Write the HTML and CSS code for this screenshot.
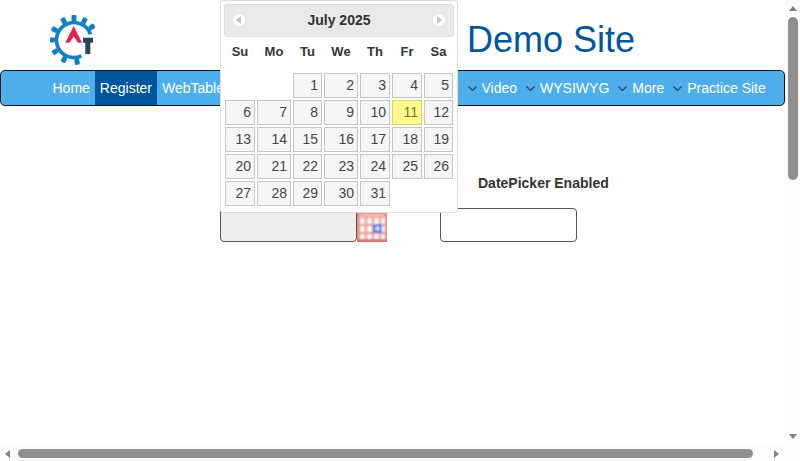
FILE: index.html
```html
<!DOCTYPE html>
<html lang="en">
<head>
<meta charset="UTF-8">
<meta name="viewport" content="width=device-width, initial-scale=1.0">
<title>Datepicker</title>
<link rel="stylesheet" href="styles.css">
</head>
<body>
<div class="window">
    <div class="page">
        <header class="site-header">
            <svg class="logo" width="50" height="54" viewBox="0 0 50 54">
                <path d="M40.5 21.3A17.5 17.5 0 1 0 31.4 42.9" fill="none" stroke="#1480c4" stroke-width="3.6"/>
                <g fill="#1480c4">
                    <rect x="21.5" y="2" width="5" height="6" rx="1"/>
                    <rect x="21.5" y="2" width="5" height="6" rx="1" transform="rotate(28 24 27)"/>
                    <rect x="21.5" y="2" width="5" height="6" rx="1" transform="rotate(54 24 27)"/>
                    <rect x="21.5" y="2" width="5" height="6" rx="1" transform="rotate(-28 24 27)"/>
                    <rect x="21.5" y="2" width="5" height="6" rx="1" transform="rotate(-62 24 27)"/>
                    <rect x="21.5" y="2" width="5" height="6" rx="1" transform="rotate(-90 24 27)"/>
                    <rect x="21.5" y="2" width="5" height="6" rx="1" transform="rotate(-122 24 27)"/>
                    <rect x="21.5" y="2" width="5" height="6" rx="1" transform="rotate(-153 24 27)"/>
                    <rect x="21.5" y="2" width="5" height="6" rx="1" transform="rotate(172 24 27)"/>
                </g>
                <path d="M23.7 13L32 29.7H28L23.7 23.5 19.4 29.7H15.3Z" fill="#e0244f"/>
                <path d="M33 24.7H43V29.7H40.3V41H35.3V29.7H33Z" fill="#24435e"/>
            </svg>
            <h1 class="site-title">Demo Site</h1>
        </header>

        <nav class="navbar">
            <a href="#">Home</a>
            <a href="#" class="active">Register</a>
            <a href="#">WebTable</a>
            <a href="#" class="has-menu">SwitchTo</a>
            <a href="#" class="has-menu"><svg class="chevron" width="9" height="5" viewBox="0 0 9 5"><path d="M.5.5l4 4 4-4" fill="none" stroke="#2f4a60" stroke-width="1.3"/></svg>Widgets</a>
            <a href="#" class="has-menu"><svg class="chevron" width="9" height="5" viewBox="0 0 9 5"><path d="M.5.5l4 4 4-4" fill="none" stroke="#2f4a60" stroke-width="1.3"/></svg>Interactions</a>
            <a href="#" class="has-menu"><svg class="chevron" width="9" height="5" viewBox="0 0 9 5"><path d="M.5.5l4 4 4-4" fill="none" stroke="#2f4a60" stroke-width="1.3"/></svg>Video</a>
            <a href="#" class="has-menu"><svg class="chevron" width="9" height="5" viewBox="0 0 9 5"><path d="M.5.5l4 4 4-4" fill="none" stroke="#2f4a60" stroke-width="1.3"/></svg>WYSIWYG</a>
            <a href="#" class="has-menu"><svg class="chevron" width="9" height="5" viewBox="0 0 9 5"><path d="M.5.5l4 4 4-4" fill="none" stroke="#2f4a60" stroke-width="1.3"/></svg>More</a>
            <a href="#" class="has-menu"><svg class="chevron" width="9" height="5" viewBox="0 0 9 5"><path d="M.5.5l4 4 4-4" fill="none" stroke="#2f4a60" stroke-width="1.3"/></svg>Practice Site</a>
        </nav>

        <main class="picker-row">
            <div class="picker-field">
                <label>DatePicker Disabled</label>
                <div class="picker-input-wrap">
                    <input type="text" class="date-input" disabled>
                    <svg class="cal-icon" width="30" height="29" viewBox="0 0 30 29">
                        <defs>
                            <filter id="soft" x="-10%" y="-10%" width="120%" height="120%"><feGaussianBlur stdDeviation="0.8"/></filter>
                        </defs>
                        <rect width="30" height="29" fill="#ee8d88"/>
                        <rect y="26" width="30" height="3" fill="#dc7470"/>
                        <g filter="url(#soft)">
                            <rect x="3" y="1" width="24" height="3" fill="#f7c0bb"/>
                            <g fill="#fff">
                                <rect x="3" y="5" width="5" height="6"/><rect x="10" y="5" width="5" height="6"/><rect x="17" y="5" width="5" height="6"/><rect x="24" y="5" width="4" height="6"/>
                                <rect x="3" y="13" width="5" height="6"/><rect x="10" y="13" width="5" height="6"/><rect x="24" y="13" width="4" height="6"/>
                                <rect x="3" y="21" width="5" height="5"/><rect x="10" y="21" width="5" height="5"/><rect x="17" y="21" width="5" height="5"/><rect x="24" y="21" width="4" height="5"/>
                            </g>
                            <rect x="16" y="11" width="9" height="9" fill="#3f72e8"/>
                            <rect x="18.5" y="13.5" width="4" height="4" fill="#f0f4fd"/>
                        </g>
                    </svg>
                </div>
            </div>
            <div class="picker-field">
                <label>DatePicker Enabled</label>
                <input type="text" class="date-input">
            </div>
        </main>

        <div class="calendar">
            <div class="cal-header">
                <span class="cal-btn"><svg width="6" height="8" viewBox="0 0 6 8"><path d="M5 0v8L0 4z" fill="#c4c4c4"/></svg></span>
                <span class="cal-month">July 2025</span>
                <span class="cal-btn"><svg width="6" height="8" viewBox="0 0 6 8"><path d="M1 0v8l5-4z" fill="#c4c4c4"/></svg></span>
            </div>
            <div class="cal-grid">
                <b>Su</b><b>Mo</b><b>Tu</b><b>We</b><b>Th</b><b>Fr</b><b>Sa</b>
                <i></i><i></i>
                <a>1</a><a>2</a><a>3</a><a>4</a><a>5</a>
                <a>6</a><a>7</a><a>8</a><a>9</a><a>10</a><a class="today">11</a><a>12</a>
                <a>13</a><a>14</a><a>15</a><a>16</a><a>17</a><a>18</a><a>19</a>
                <a>20</a><a>21</a><a>22</a><a>23</a><a>24</a><a>25</a><a>26</a>
                <a>27</a><a>28</a><a>29</a><a>30</a><a>31</a>
            </div>
        </div>
    </div>

    <div class="scrollbar-v">
        <span class="arrow-up"></span>
        <span class="thumb-v"></span>
        <span class="arrow-down"></span>
    </div>
    <div class="scrollbar-h">
        <span class="arrow-left"></span>
        <span class="thumb-h"></span>
        <span class="arrow-right"></span>
    </div>
    <div class="scrollbar-corner"></div>
</div>
</body>
</html>
```

FILE: styles.css
```css
body {
    font-family: "Liberation Sans", Arial, sans-serif;
    font-size: 14px;
    color: #333;
    background-color: #fff;
    margin: 0;
    padding: 0;
    height: 100vh;
    overflow: hidden;
}

.window {
    display: grid;
    grid-template-columns: 1fr 15px;
    grid-template-rows: 1fr 15px;
    height: 100%;
}

.page {
    position: relative;
    overflow: hidden;
}

.site-header {
    display: flex;
    align-items: flex-start;
    height: 70px;
    padding-left: 50px;
}

.logo {
    margin-top: 13px;
}

.site-title {
    margin: 20px 0 0 367px;
    font-size: 36px;
    font-weight: normal;
    line-height: 40px;
    color: #00569c;
}

.navbar {
    display: flex;
    height: 34px;
    padding-left: 46.5px;
    background-color: #4eaeec;
    border: 1px solid #111;
    border-radius: 5px;
}

.navbar a {
    display: flex;
    align-items: center;
    flex: none;
    padding: 0 5px;
    color: #fff;
    text-decoration: none;
    line-height: 34px;
}

.navbar a.active {
    background-color: #00569c;
}

.navbar a.has-menu {
    padding: 0 4.5px;
}

.chevron {
    margin-right: 5px;
}

.picker-row {
    display: flex;
    padding: 70px 0 0 220px;
    gap: 83px;
}

.picker-field {
    display: flex;
    flex-direction: column;
    width: 137px;
}

.picker-field label {
    height: 32px;
    padding-left: 38px;
    font-weight: bold;
    line-height: 14px;
    white-space: nowrap;
}

.picker-input-wrap {
    display: flex;
    align-items: flex-end;
}

.date-input {
    box-sizing: border-box;
    width: 137px;
    height: 34px;
    padding: 0;
    flex: none;
    background-color: #fff;
    border: 1px solid #555;
    border-radius: 4px;
}

.date-input:disabled {
    background-color: #eee;
}

.cal-icon {
    flex: none;
}

.calendar {
    position: absolute;
    left: 220px;
    top: 0;
    box-sizing: border-box;
    width: 238px;
    height: 213px;
    padding: 3px;
    background-color: #fff;
    border: 1px solid #ddd;
    border-radius: 3px;
}

.cal-header {
    display: flex;
    align-items: center;
    justify-content: space-between;
    box-sizing: border-box;
    height: 33px;
    padding: 0 8px 2px;
    background-color: #e9e9e9;
    border: 1px solid #ddd;
    border-radius: 3px;
}

.cal-month {
    font-weight: bold;
}

.cal-btn {
    display: flex;
    align-items: center;
    justify-content: center;
    width: 12px;
    height: 12px;
    background-color: #fff;
    border-radius: 50%;
}

.cal-grid {
    display: grid;
    grid-template-columns: 30px 34px 29px 34px 30px 30px 29px;
    grid-template-rows: 34px repeat(5, 25px);
    gap: 2px;
    margin: 0 0 0 1px;
}

.cal-grid b {
    font-size: 13px;
    line-height: 30px;
    text-align: center;
}

.cal-grid a {
    box-sizing: border-box;
    padding-right: 3px;
    color: #454545;
    line-height: 23px;
    text-align: right;
    background-color: #f6f6f6;
    border: 1px solid #c5c5c5;
}

.cal-grid a.today {
    color: #777620;
    background-color: #fffa90;
    border-color: #dad55e;
}

.scrollbar-v,
.scrollbar-h,
.scrollbar-corner {
    background-color: #fcfcfc;
}

.scrollbar-v {
    display: flex;
    flex-direction: column;
    align-items: center;
    padding: 6px 0 7px 0;
}

.thumb-v {
    width: 10px;
    height: 163px;
    margin: 6px 0 auto;
    background-color: #8f8f8f;
    border-radius: 5px;
}

.scrollbar-h {
    display: flex;
    align-items: center;
    padding-left: 5px;
}

.thumb-h {
    width: 735px;
    height: 9px;
    margin-left: 8px;
    background-color: #8f8f8f;
    border-radius: 5px;
}

.arrow-up,
.arrow-down {
    width: 0;
    height: 0;
    border-left: 4.5px solid transparent;
    border-right: 4.5px solid transparent;
}

.arrow-up {
    border-bottom: 5px solid #808080;
}

.arrow-down {
    border-top: 5px solid #808080;
}

.arrow-left,
.arrow-right {
    width: 0;
    height: 0;
    border-top: 4.5px solid transparent;
    border-bottom: 4.5px solid transparent;
}

.arrow-left {
    border-right: 5px solid #808080;
}

.arrow-right {
    margin-left: 21px;
    border-left: 5px solid #808080;
}
```
